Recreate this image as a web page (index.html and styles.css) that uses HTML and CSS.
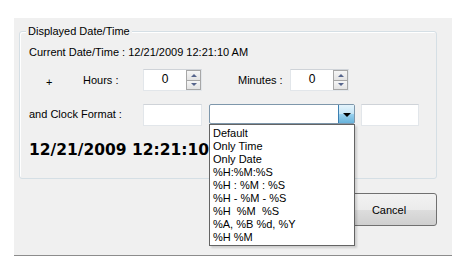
FILE: index.html
```html
<!DOCTYPE html>
<html lang="en">
<head>
    <meta charset="UTF-8">
    <title>Displayed Date/Time</title>
    <link rel="stylesheet" href="styles.css">
</head>
<body>

    <div class="window">
        <!-- Group box -->
        <div class="group">
            <span class="legend">Displayed Date/Time</span>

            <div class="current">Current Date/Time : 12/21/2009 12:21:10 AM</div>

            <div class="row">
                <span class="plus">+</span>
                <span class="label label-hours">Hours :</span>
                <div class="spin">
                    <span class="spin-value">0</span>
                    <div class="spin-buttons">
                        <span class="spin-btn up"></span>
                        <span class="spin-btn down"></span>
                    </div>
                </div>
                <span class="label label-minutes">Minutes :</span>
                <div class="spin">
                    <span class="spin-value">0</span>
                    <div class="spin-buttons">
                        <span class="spin-btn up"></span>
                        <span class="spin-btn down"></span>
                    </div>
                </div>
            </div>

            <div class="row row-format">
                <span class="label label-format">and Clock Format :</span>
                <div class="textbox"></div>
                <div class="combo">
                    <div class="combo-field"></div>
                    <div class="combo-button"><span class="combo-arrow"></span></div>
                    <ul class="combo-list">
                        <li>Default</li>
                        <li>Only Time</li>
                        <li>Only Date</li>
                        <li>%H:%M:%S</li>
                        <li>%H : %M : %S</li>
                        <li>%H - %M - %S</li>
                        <li>%H&nbsp;&nbsp;%M&nbsp;&nbsp;%S</li>
                        <li>%A, %B %d, %Y</li>
                        <li>%H %M</li>
                    </ul>
                </div>
                <div class="textbox textbox-small"></div>
            </div>

            <!-- the rest of the value sits under the open list -->
            <div class="big-date">12/21/2009 12:21:10</div>
        </div>

        <div class="actions">
            <button type="button" class="btn">Cancel</button>
        </div>
    </div>

</body>
</html>
```

FILE: styles.css
```css
body {
    margin: 0;
    background: #fff;
    font-family: "Liberation Sans", Arial, sans-serif;
    font-size: 11px;
    color: #000;
}

.window {
    margin: 18px 0 0 14px;
    width: 438px;
    height: 224px;
    background: #f0f0f0;
    border-bottom: 1px solid #8c8c8c;
    padding-top: 13px;
    box-sizing: content-box;
}

.group {
    position: relative;
    margin-left: 5px;
    width: 418px;
    height: 148px;
    box-sizing: border-box;
    border: 1px solid #d5dfe5;
    border-radius: 3px;
    box-shadow: inset 1px 1px 0 #fff;
    padding: 14px 0 0 9px;
}

.legend {
    position: absolute;
    top: -7px;
    left: 6px;
    padding: 0 2px;
    line-height: 13px;
    background: #f0f0f0;
}

.current {
    line-height: 13px;
}

.row {
    display: flex;
    align-items: center;
    height: 22px;
    margin-top: 10px;
}

.row-format {
    align-items: flex-start;
    margin-top: 13px;
}

.plus {
    width: 37px;
    padding-left: 17px;
    padding-top: 4px;
}

.label {
    line-height: 13px;
}

.label-hours {
    width: 60px;
}

.label-minutes {
    width: 52px;
    margin-left: 36px;
}

.label-format {
    width: 114px;
    padding-top: 4px;
}

.spin {
    display: flex;
    width: 59px;
    height: 22px;
    box-sizing: border-box;
    background: #fff;
    border: 1px solid #e2e6ea;
    border-top-color: #cfd3d8;
}

.spin-value {
    flex: 1;
    text-align: center;
    line-height: 18px;
    font-size: 12px;
}

.spin-buttons {
    display: flex;
    flex-direction: column;
    width: 15px;
}

.spin-btn {
    flex: 1;
    position: relative;
    border: 1px solid #a7a7a7;
    background: linear-gradient(#f6f6f6, #e3e3e3);
}

.spin-btn.down {
    border-top: none;
}

.spin-btn::after {
    content: '';
    position: absolute;
    left: 4px;
    top: 3px;
    border-left: 3px solid transparent;
    border-right: 3px solid transparent;
}

.spin-btn.up::after {
    border-bottom: 3px solid #56658c;
}

.spin-btn.down::after {
    top: 2px;
    border-top: 3px solid #56658c;
}

.textbox {
    width: 59px;
    height: 22px;
    box-sizing: border-box;
    background: #fff;
    border: 1px solid #e2e6ea;
    border-top-color: #cfd3d8;
}

.textbox-small {
    width: 58px;
    margin-left: 6px;
}

.combo {
    position: relative;
    display: flex;
    width: 146px;
    height: 20px;
    margin-left: 7px;
    box-sizing: border-box;
    background: #fff;
    border: 1px solid #7e97ab;
    border-radius: 2px;
}

.combo-field {
    flex: 1;
}

.combo-button {
    width: 15px;
    border-left: 1px solid #3c7fb1;
    background: linear-gradient(#e5f4fc 0%, #c4e5f6 50%, #98d1ef 51%, #68b3db 100%);
    display: flex;
    align-items: center;
    justify-content: center;
}

.combo-arrow {
    border-left: 4px solid transparent;
    border-right: 4px solid transparent;
    border-top: 4px solid #000;
    margin-top: 1px;
}

.combo-list {
    position: absolute;
    top: 19px;
    left: -1px;
    width: 146px;
    box-sizing: border-box;
    margin: 0;
    padding: 2px 0 1px 3px;
    list-style: none;
    background: #fff;
    border: 1px solid #646464;
    box-shadow: 2px 2px 2px rgba(0, 0, 0, 0.15);
    z-index: 2;
}

.combo-list li {
    line-height: 13px;
    height: 13px;
    font-size: 11px;
    white-space: nowrap;
}

.big-date {
    width: 180px;
    margin-top: 15px;
    font-family: "DejaVu Sans", Verdana, sans-serif;
    font-weight: bold;
    font-size: 15.5px;
    line-height: 18px;
    white-space: nowrap;
    overflow: hidden;
}

.actions {
    display: flex;
    justify-content: flex-end;
    margin-top: 14px;
    padding-right: 15px;
}

.btn {
    width: 96px;
    height: 33px;
    border: 1px solid #707070;
    border-radius: 3px;
    background: linear-gradient(#f2f2f2 0%, #ebebeb 50%, #dddddd 51%, #cfcfcf 100%);
    font-family: "Liberation Sans", Arial, sans-serif;
    font-size: 11px;
    color: #000;
    padding: 0;
}
```
